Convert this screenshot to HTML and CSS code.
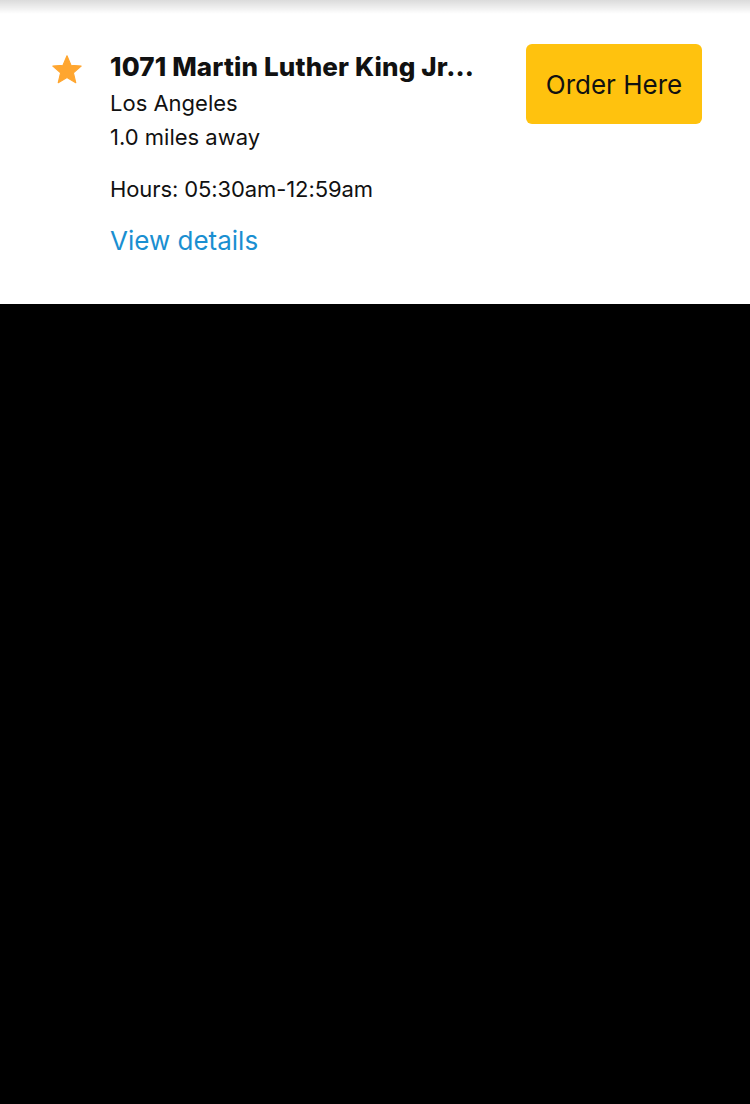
FILE: index.html
```html
<!DOCTYPE html>
<html>
<head>
<meta charset="utf-8">
<link rel="stylesheet" href="styles.css">
</head>
<body>
<div class="panel">
  <div class="row">
    <div class="star-col">
      <svg class="star" width="34" height="34" viewBox="0 0 24 24"><path fill="#FFA630" stroke="#FFA630" stroke-width="0.8" stroke-linejoin="round" d="M12 17.27L18.18 21l-1.64-7.03L22 9.24l-7.19-.61L12 2 9.19 8.63 2 9.24l5.46 4.73L5.82 21z"/></svg>
    </div>
    <div class="info">
      <div class="title">1071 Martin Luther King Jr...</div>
      <div class="line first">Los Angeles</div>
      <div class="line">1.0 miles away</div>
      <div class="line hours">Hours: 05:30am-12:59am</div>
      <a class="details">View details</a>
    </div>
    <div class="btn-col">
      <button class="order">Order Here</button>
    </div>
  </div>
</div>
</body>
</html>
```

FILE: styles.css
```css
html, body {
  margin: 0;
  padding: 0;
  background: #000;
}
body {
  width: 750px;
  height: 1104px;
  font-family: Inter, "Liberation Sans", sans-serif;
}
.panel {
  background: #fff;
  height: 304px;
  box-sizing: border-box;
  background-image: linear-gradient(to bottom, rgba(0,0,0,0.14), rgba(0,0,0,0) 14px);
}
.row {
  display: flex;
  padding: 44px 48px 0 50px;
}
.star-col {
  width: 60px;
  padding-top: 9px;
}
.star {
  display: block;
}
.info {
  flex: 1;
  color: #111;
}
.title {
  font-weight: 800;
  font-size: 26px;
  line-height: 30px;
  margin-top: 8px;
  letter-spacing: 0.15px;
  white-space: nowrap;
}
.line {
  font-size: 22px;
  line-height: 34px;
}
.first {
  margin-top: 4px;
}
.hours {
  margin-top: 18px;
  letter-spacing: -0.1px;
}
.details {
  display: block;
  color: #1a8fd1;
  font-size: 26px;
  line-height: 34px;
  margin-top: 18px;
}
.order {
  width: 176px;
  height: 80px;
  border: none;
  border-radius: 6px;
  background: #FFC20E;
  color: #111;
  font-family: Inter, "Liberation Sans", sans-serif;
  font-size: 26px;
  padding: 0;
}
```
